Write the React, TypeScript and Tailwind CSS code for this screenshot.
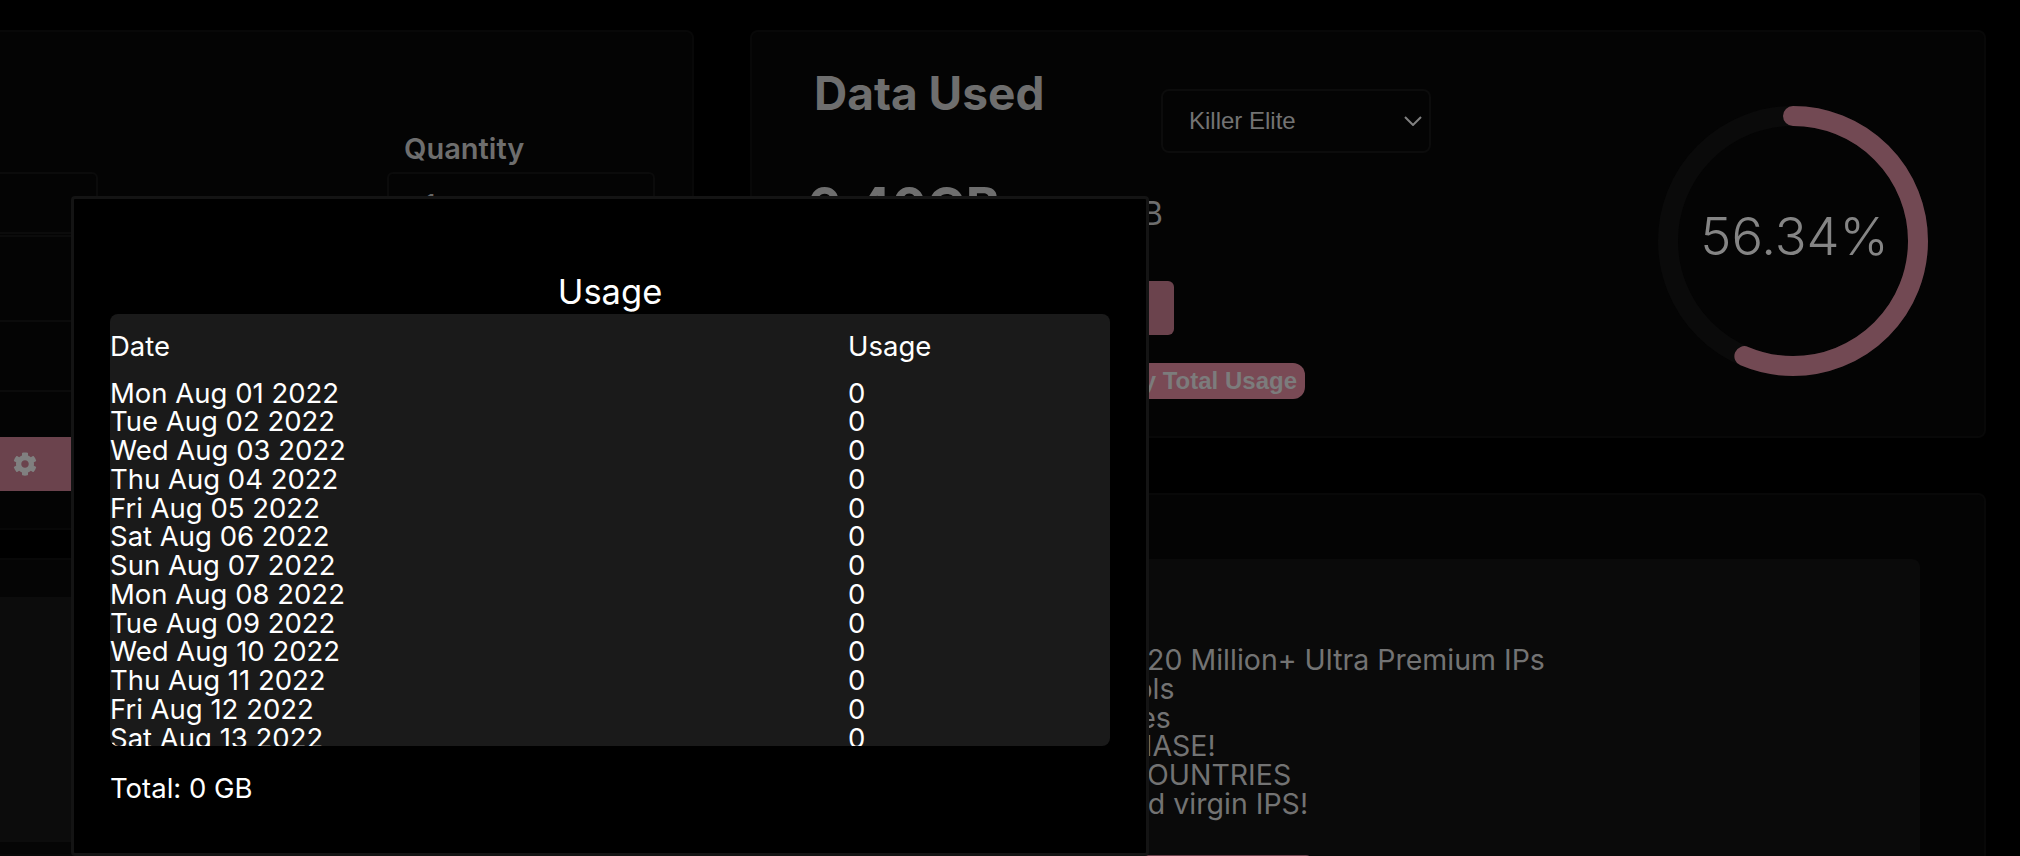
import { FaCog } from "react-icons/fa";

const rows = [
  "Mon Aug 01 2022",
  "Tue Aug 02 2022",
  "Wed Aug 03 2022",
  "Thu Aug 04 2022",
  "Fri Aug 05 2022",
  "Sat Aug 06 2022",
  "Sun Aug 07 2022",
  "Mon Aug 08 2022",
  "Tue Aug 09 2022",
  "Wed Aug 10 2022",
  "Thu Aug 11 2022",
  "Fri Aug 12 2022",
  "Sat Aug 13 2022",
  "Sun Aug 14 2022",
];

const features = [
  "Access to 20 Million+ Ultra Premium IPs",
  "All Protocols",
  "All Websites",
  "OF PURCHASE!",
  "OF 195+ COUNTRIES",
  "Pristine and virgin IPS!",
];

function UsageRing() {
  const r = 125;
  const c = 2 * Math.PI * r;
  return (
    <div className="relative h-[270px] w-[270px]">
      <svg viewBox="0 0 270 270" className="h-full w-full">
        <circle cx="135" cy="135" r={r} fill="none" stroke="#0a0a0a" strokeWidth="20" />
        <circle
          cx="135"
          cy="135"
          r={r}
          fill="none"
          stroke="#724953"
          strokeWidth="20"
          strokeLinecap="round"
          strokeDasharray={`${c * 0.5634} ${c}`}
          transform="rotate(-90 135 135)"
        />
      </svg>
      <div className="absolute inset-0 flex items-center justify-center pb-[9px] pl-[3px] text-[52.5px] font-light text-[#858585]">
        56.34%
      </div>
    </div>
  );
}

function UsageModal() {
  return (
    <div className="absolute left-[71px] top-[196px] h-[660px] w-[1078px] rounded-[4px] border-[3px] border-[#141414] bg-black px-[36px] pt-[73px] text-white">
      <h2 className="text-center text-[34.5px] leading-[40px]">Usage</h2>
      <div className="mt-[2px] h-[432px] overflow-hidden rounded-[8px] bg-[#1a1a1a]">
        <div className="grid grid-cols-[738px_1fr] pt-[14px] text-[27.5px] leading-[36px]">
          <div>Date</div>
          <div>Usage</div>
        </div>
        <div className="mt-[14.5px] text-[27.5px] leading-[28.75px]">
          {rows.map((d) => (
            <div key={d} className="grid grid-cols-[738px_1fr]">
              <div>{d}</div>
              <div>0</div>
            </div>
          ))}
        </div>
      </div>
      <p className="mt-[24px] text-[27.5px] leading-[36px]">Total: 0 GB</p>
    </div>
  );
}

export default function App() {
  return (
    <div
      className="relative h-[856px] w-[2020px] overflow-hidden bg-black"
      style={{ fontFamily: "Inter, 'Noto Sans', sans-serif" }}
    >
      <div className="flex items-start gap-[56px] pt-[30px] pr-[34px]">
        {/* left column */}
        <div className="flex w-[694px] shrink-0 flex-col gap-[28px]">
          <div className="h-[500px] rounded-r-[8px] border-2 border-l-0 border-[#080808] bg-[#040404]">
            <div className="pl-[404px] pt-[99px] text-[29px] leading-[36px] font-semibold text-[#6e6e6e]">
              Quantity
            </div>
            <div className="mt-[5px] flex h-[65px] items-start justify-between border-b-2 border-[#0b0b0b] pr-[37px]">
              <div className="h-[62px] w-[98px] rounded-r-[6px] border-2 border-l-0 border-[#0b0b0b]" />
              <div className="flex h-[62px] w-[268px] items-center rounded-[6px] border-2 border-[#0b0b0b] pl-[36px] text-[26px] text-[#666666]">
                1
              </div>
            </div>
            <div className="h-[85px] border-b-2 border-[#0b0b0b]" />
            <div className="h-[70px] border-b-2 border-[#0b0b0b]" />
            <div className="mt-[45px] flex h-[54px] w-[72px] items-center justify-center bg-[#6b434d] pr-[22px]">
              <FaCog size={24} color="#808080" />
            </div>
          </div>
          <div className="h-[298px] rounded-r-[8px] border-2 border-l-0 border-[#080808] bg-[#050505] pt-[37px]">
            <div className="h-[245px] bg-[#0c0c0c]" />
          </div>
        </div>

        {/* right column */}
        <div className="flex flex-1 flex-col gap-[55px]">
          <div className="flex h-[408px] items-start justify-between rounded-[8px] border-2 border-[#080808] bg-[#040404] pl-[62px] pr-[56px]">
            <div className="flex w-[617px] flex-col">
              <div className="flex items-start justify-between">
                <h1 className="mt-[33px] text-[46px] leading-[56px] font-bold text-[#6e6e6e]">Data Used</h1>
                <div className="mt-[57px] flex h-[64px] w-[270px] items-center justify-between rounded-[8px] border-2 border-[#0c0c0c] pl-[26px] pr-[7px] font-['Liberation_Sans'] text-[24px] text-[#737373]">
                  Killer Elite
                  <svg width="18" height="10" viewBox="0 0 18 10" fill="none" stroke="#808080" strokeWidth="2">
                    <path d="M1 1l8 8 8-8" />
                  </svg>
                </div>
              </div>
              <div className="mt-[24px] -ml-[7px] flex w-[356px] items-baseline justify-between text-[#6e6e6e]">
                <span className="text-[52px] leading-[60px] font-bold">6.40GB</span>
                <span className="text-[32px] leading-[40px]">/ 11.36 GB</span>
              </div>
              <div className="mt-[44px] h-[54px] w-[360px] rounded-[6px] bg-[#6b434d]" />
              <div className="mt-[28px] flex h-[36px] w-[491px] items-center justify-end rounded-[12px] bg-[#794a55] pr-[8px] font-['Liberation_Sans'] text-[24px] font-bold whitespace-nowrap text-[#7c7c7c]">
                Monthly Total Usage
              </div>
            </div>
            <div className="mt-[74px]">
              <UsageRing />
            </div>
          </div>

          <div className="h-[400px] rounded-[8px] border-2 border-[#080808] bg-[#040404] px-[64px] pt-[64px]">
            <div className="h-[400px] rounded-[8px] bg-[#0a0a0a] pl-[190px] pt-[87px] text-[28.5px] leading-[28.75px] whitespace-nowrap text-[#737373]">
              {features.map((f) => (
                <div key={f}>{f}</div>
              ))}
              <div className="mt-[36px] ml-[-2px] h-[40px] w-[308px] rounded-[6px] bg-[#6b434d]" />
            </div>
          </div>
        </div>
      </div>

      <UsageModal />
    </div>
  );
}
